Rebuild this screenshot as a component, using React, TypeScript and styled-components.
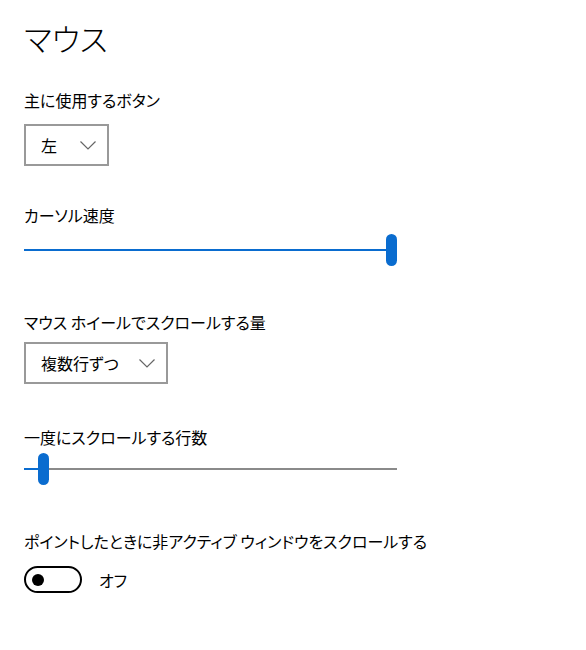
import React from 'react';
import styled, { createGlobalStyle } from 'styled-components';

const GlobalStyle = createGlobalStyle`
  body {
    margin: 0;
    background: #ffffff;
    font-family: "Noto Sans CJK JP", "Noto Sans", sans-serif;
    font-feature-settings: "palt";
    color: #000000;
  }
`;

const Page = styled.div`
  padding: 16px 24px 40px 24px;
  display: flex;
  flex-direction: column;
`;

const Title = styled.h1`
  margin: 0;
  font-size: 31px;
  font-weight: 300;
  line-height: 44px;
`;

const Section = styled.section<{ $top: number }>`
  margin-top: ${p => p.$top}px;
  display: flex;
  flex-direction: column;
`;

const Label = styled.div<{ $gap: number }>`
  font-size: 16px;
  line-height: 22px;
  margin-bottom: ${p => p.$gap}px;
`;

const Select = styled.div`
  align-self: flex-start;
  min-width: 85px;
  height: 42px;
  box-sizing: border-box;
  border: 2px solid #999999;
  display: flex;
  align-items: center;
  justify-content: space-between;
  gap: 20px;
  padding: 0 11px 0 15px;
  font-size: 16px;
`;

const Chevron = () => (
  <svg width="16" height="9" viewBox="0 0 16 9">
    <polyline points="0.5,0.5 8,8 15.5,0.5" fill="none" stroke="#666" strokeWidth="1.2" />
  </svg>
);

const SliderBox = styled.div`
  position: relative;
  width: 373px;
  height: 32px;
  display: flex;
  align-items: center;
`;

const Track = styled.div`
  width: 100%;
  height: 2px;
  background: #8a8a8a;
  display: flex;
`;

const Fill = styled.div`
  height: 100%;
  background: #0a6ccf;
`;

const Thumb = styled.div`
  position: absolute;
  top: 0;
  width: 11px;
  height: 32px;
  border-radius: 6px;
  background: #0a6ccf;
`;

const Slider = ({ value }: { value: number }) => {
  const left = value * (373 - 11);
  return (
    <SliderBox>
      <Track>
        <Fill style={{ width: left + 5 }} />
      </Track>
      <Thumb style={{ left }} />
    </SliderBox>
  );
};

const ToggleRow = styled.div`
  display: flex;
  align-items: center;
  gap: 17px;
  font-size: 16px;
`;

const ToggleTrack = styled.div`
  width: 58px;
  height: 27px;
  box-sizing: border-box;
  border: 2px solid #000000;
  border-radius: 14px;
  display: flex;
  align-items: center;
  padding-left: 6px;
`;

const Knob = styled.div`
  width: 12px;
  height: 12px;
  border-radius: 50%;
  background: #000000;
`;

export default function App() {
  return (
    <Page>
      <GlobalStyle />
      <Title>マウス</Title>

      <Section $top={29}>
        <Label $gap={13}>主に使用するボタン</Label>
        <Select>
          <span>左</span>
          <Chevron />
        </Select>
      </Section>

      <Section $top={38}>
        <Label $gap={8}>カーソル速度</Label>
        <Slider value={1} />
      </Section>

      <Section $top={45}>
        <Label $gap={9}>マウス ホイールでスクロールする量</Label>
        <Select>
          <span>複数行ずつ</span>
          <Chevron />
        </Select>
      </Section>

      <Section $top={42}>
        <Label $gap={5}>一度にスクロールする行数</Label>
        <Slider value={0.04} />
      </Section>

      <Section $top={45}>
        <Label $gap={14}>ポイントしたときに非アクティブ ウィンドウをスクロールする</Label>
        <ToggleRow>
          <ToggleTrack>
            <Knob />
          </ToggleTrack>
          <span>オフ</span>
        </ToggleRow>
      </Section>
    </Page>
  );
}
